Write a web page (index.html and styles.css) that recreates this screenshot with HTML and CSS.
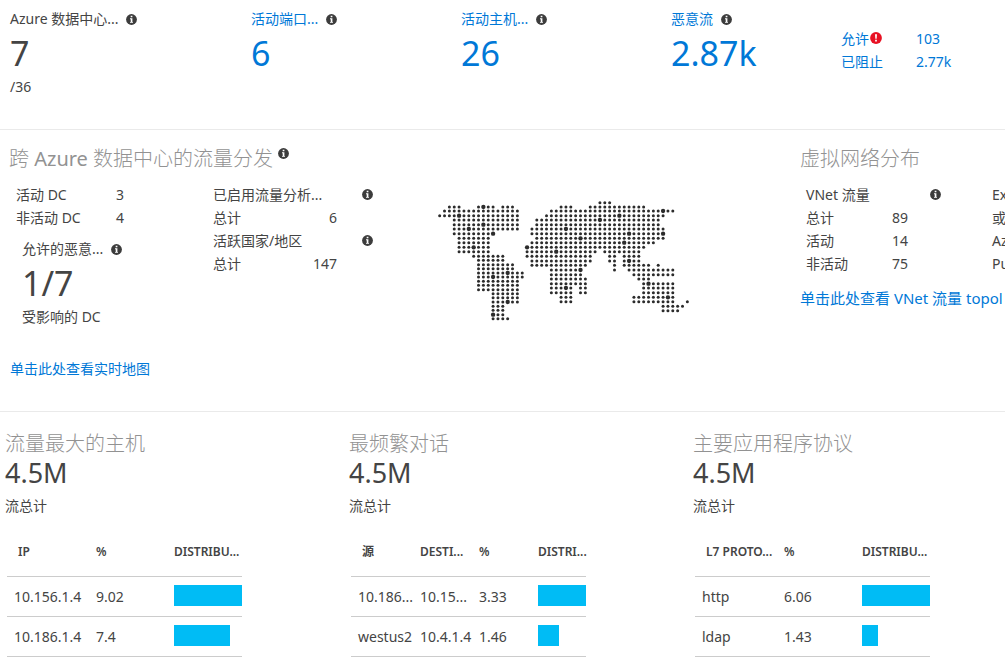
FILE: index.html
```html
<!DOCTYPE html>
<html lang="zh-CN">
<head>
<meta charset="utf-8">
<meta name="viewport" content="width=device-width, initial-scale=1">
<title>流量分析</title>
<link rel="stylesheet" href="styles.css">
</head>
<body>
<svg class="sprite" aria-hidden="true">
  <symbol id="info" viewBox="0 0 11 11">
    <circle cx="5.5" cy="5.5" r="5.4" fill="#3c3c3c"/>
    <path d="M4.7 1.8h1.7v1.5H4.7zM4 4.3h2.4v3.6H7v.9H4v-.9h.7V5.2H4z" fill="#fff"/>
  </symbol>
  <symbol id="alert" viewBox="0 0 11 11">
    <circle cx="5.5" cy="5.5" r="5.4" fill="#e81123"/>
    <path d="M4.6 2h1.8l-.3 4.3H4.9zM4.7 7.2h1.6v1.5H4.7z" fill="#fff"/>
  </symbol>
</svg>

<section class="summary">
  <div class="metric">
    <div class="metric-label">Azure 数据中心... <svg class="icon"><use href="#info"/></svg></div>
    <div class="metric-value">7</div>
    <div class="metric-sub">/36</div>
  </div>
  <div class="metric">
    <div class="metric-label"><a href="#endpoints">活动端口...</a> <svg class="icon"><use href="#info"/></svg></div>
    <a class="metric-value" href="#endpoints">6</a>
  </div>
  <div class="metric">
    <div class="metric-label"><a href="#hosts">活动主机...</a> <svg class="icon"><use href="#info"/></svg></div>
    <a class="metric-value" href="#hosts">26</a>
  </div>
  <div class="metric">
    <div class="metric-label"><a href="#malicious">恶意流</a> <svg class="icon"><use href="#info"/></svg></div>
    <a class="metric-value" href="#malicious">2.87k</a>
  </div>
  <dl class="flow-split">
    <dt><a href="#allowed">允许</a><svg class="icon icon-alert"><use href="#alert"/></svg></dt>
    <dd><a href="#allowed">103</a></dd>
    <dt><a href="#blocked">已阻止</a></dt>
    <dd><a href="#blocked">2.77k</a></dd>
  </dl>
</section>

<section class="distribution">
  <div class="datacenters">
    <h2 class="title"><span>跨 <span class="title-brand">Azure</span> 数据中心的流量分发</span><svg class="icon icon-raised"><use href="#info"/></svg></h2>
    <div class="datacenters-body">
      <div class="dc-status">
        <dl class="dc-counts">
          <dt>活动 DC</dt><dd>3</dd>
          <dt>非活动 DC</dt><dd>4</dd>
        </dl>
        <div class="metric affected">
          <div class="metric-label">允许的恶意... <svg class="icon"><use href="#info"/></svg></div>
          <div class="metric-value">1/7</div>
          <div class="metric-sub">受影响的 DC</div>
        </div>
      </div>
      <div class="totals">
        <div class="totals-head">已启用流量分析... <svg class="icon"><use href="#info"/></svg></div>
        <div class="totals-row"><span>总计</span><span>6</span></div>
        <div class="totals-head">活跃国家/地区 <svg class="icon"><use href="#info"/></svg></div>
        <div class="totals-row"><span>总计</span><span>147</span></div>
      </div>
      <svg class="map" id="map" viewBox="20 30 756 366" role="img" aria-label="世界地图"></svg>
    </div>
    <a class="map-link" href="#map">单击此处查看实时地图</a>
  </div>

  <div class="vnet">
    <h2 class="title">虚拟网络分布</h2>
    <div class="vnet-body">
      <dl class="vnet-counts">
        <dt class="vnet-head">VNet 流量 <svg class="icon"><use href="#info"/></svg></dt>
        <dt>总计</dt><dd>89</dd>
        <dt>活动</dt><dd>14</dd>
        <dt>非活动</dt><dd>75</dd>
      </dl>
      <div class="vnet-more">
        <div>Ex</div><div>或</div><div>Az</div><div>Pu</div>
      </div>
    </div>
    <a class="topology-link" href="#topology">单击此处查看 VNet 流量 topol</a>
  </div>
</section>

<section class="rankings">
  <div class="panel">
    <h2 class="title">流量最大的主机</h2>
    <div class="panel-value">4.5M</div>
    <div class="panel-sub">流总计</div>
    <table class="rank">
      <colgroup><col class="c-name"><col class="c-pct"><col></colgroup>
      <thead><tr><th>IP</th><th>%</th><th>DISTRIBU...</th></tr></thead>
      <tbody>
        <tr><td>10.156.1.4</td><td>9.02</td><td><div class="bar" style="width:100%"></div></td></tr>
        <tr><td>10.186.1.4</td><td>7.4</td><td><div class="bar" style="width:82%"></div></td></tr>
      </tbody>
    </table>
  </div>
  <div class="panel">
    <h2 class="title">最频繁对话</h2>
    <div class="panel-value">4.5M</div>
    <div class="panel-sub">流总计</div>
    <table class="rank">
      <colgroup><col class="c-source"><col class="c-part"><col class="c-part"><col></colgroup>
      <thead><tr><th>源</th><th>DESTI...</th><th>%</th><th>DISTRI...</th></tr></thead>
      <tbody>
        <tr><td>10.186...</td><td>10.15...</td><td>3.33</td><td><div class="bar" style="width:100%"></div></td></tr>
        <tr><td>westus2</td><td>10.4.1.4</td><td>1.46</td><td><div class="bar" style="width:44%"></div></td></tr>
      </tbody>
    </table>
  </div>
  <div class="panel">
    <h2 class="title">主要应用程序协议</h2>
    <div class="panel-value">4.5M</div>
    <div class="panel-sub">流总计</div>
    <table class="rank">
      <colgroup><col class="c-name"><col class="c-pct"><col></colgroup>
      <thead><tr><th>L7 PROTO...</th><th>%</th><th>DISTRIBU...</th></tr></thead>
      <tbody>
        <tr><td>http</td><td>6.06</td><td><div class="bar" style="width:100%"></div></td></tr>
        <tr><td>ldap</td><td>1.43</td><td><div class="bar" style="width:24%"></div></td></tr>
      </tbody>
    </table>
  </div>
</section>
<script src="map.js"></script>
</body>
</html>
```
FILE: styles.css
```css
* { box-sizing: border-box; }

body {
  margin: 0;
  background: #fff;
  color: #444;
  font-family: "Noto Sans", "Noto Sans CJK SC", sans-serif;
  font-size: 14px;
  line-height: 23px;
  overflow-x: hidden;
}

a { color: #0078d7; text-decoration: none; }
dl, dd, h2 { margin: 0; }

.sprite { position: absolute; width: 0; height: 0; }
.icon { display: block; flex: none; width: 11px; height: 11px; }

.title {
  display: flex;
  color: #929292;
  font-size: 20px;
  font-weight: 300;
  line-height: 28px;
  white-space: nowrap;
}
.title-brand { font-weight: 400; }
.icon-raised { margin: 3px 0 0 5px; }

/* Headline figures */
.summary {
  display: grid;
  grid-template-columns: 241fr 210fr 210fr 170fr 164fr;
  height: 130px;
  padding: 8px 0 0 10px;
  border-bottom: 1px solid #eaeaea;
}
.metric-label {
  display: flex;
  align-items: center;
  gap: 8px;
  line-height: 22px;
  white-space: nowrap;
}
.metric-value { display: block; font-size: 34px; line-height: 46px; }
.metric-sub { line-height: 22px; }

.flow-split {
  display: grid;
  grid-template-columns: 75px 1fr;
  align-content: start;
  padding-top: 19px;
}
.flow-split dt { display: flex; }
.icon-alert { width: 12px; height: 12px; margin: 5px 0 0 1px; }

/* Traffic distribution */
.distribution {
  display: grid;
  grid-template-columns: minmax(0, 1fr) 205px;
  padding: 15px 0 31px;
  border-bottom: 1px solid #eaeaea;
}
.datacenters .title { padding-left: 9px; }
.datacenters-body {
  display: grid;
  grid-template-columns: 213px 224px 252px;
  padding-top: 10px;
}
.dc-counts {
  display: grid;
  grid-template-columns: 100px 1fr;
  padding-left: 16px;
}
.affected { padding: 9px 0 0 22px; }
.totals { width: 160px; }
.totals-head {
  display: flex;
  align-items: center;
  justify-content: space-between;
  white-space: nowrap;
}
.totals-row {
  display: flex;
  justify-content: space-between;
  padding-right: 36px;
}
.map { display: block; width: 252px; height: 122px; margin-top: 17px; fill: #2b2b2b; }
.map-link { display: inline-block; margin: 30px 0 0 10px; line-height: 22px; }

.vnet { overflow: hidden; white-space: nowrap; }
.vnet-body { display: flex; padding: 10px 0 0 6px; }
.vnet-counts {
  display: grid;
  flex: none;
  grid-template-columns: 86px 1fr;
  width: 186px;
}
.vnet-head {
  display: flex;
  grid-column: 1 / -1;
  align-items: center;
  justify-content: space-between;
  padding-right: 51px;
}
.topology-link { display: inline-block; margin-top: 12px; font-size: 15px; line-height: 22px; }

/* Top-talker panels */
.rankings {
  display: grid;
  grid-template-columns: 344fr 344fr 312fr;
  padding: 18px 0 0 5px;
}
.panel-value { font-size: 27px; line-height: 30px; }
.panel-sub { margin-top: 7px; line-height: 22px; }

.rank {
  width: 235px;
  margin: 11px 0 0 2px;
  border-collapse: collapse;
  table-layout: fixed;
}
.c-name { width: 89px; }
.c-pct { width: 78px; }
.c-source { width: 69px; }
.c-part { width: 59px; }
.rank th,
.rank td {
  height: 40px;
  padding: 0;
  border-bottom: 1px solid #ccc;
  text-align: left;
  white-space: nowrap;
}
.rank th { height: 48px; font-size: 12px; font-weight: 600; }
.rank th:first-child { padding-left: 11px; }
.rank td:first-child { padding-left: 7px; }
.bar { height: 21px; margin-bottom: 2px; background: #00bcf5; }
```
FILE: map.js
```js
// Each row: y, runs of dot columns [first, last], columns with an enlarged dot.
const rows = [
  [38, [[33, 35]], []],
  [51, [[2, 4], [8, 11], [13, 15], [25, 27], [31, 42]], [9]],
  [63, [[1, 16], [23, 48]], [46]],
  [77, [[0, 16], [22, 46]], [4, 37]],
  [90, [[3, 16], [20, 45]], [33]],
  [104, [[3, 16], [20, 45]], [9]],
  [117, [[3, 16], [19, 46]], [6, 26]],
  [131, [[3, 11], [19, 46]], [11, 39, 46]],
  [145, [[4, 10], [20, 46]], [29]],
  [158, [[4, 10], [19, 44]], [38]],
  [172, [[4, 10], [18, 42]], [7, 18]],
  [185, [[4, 10], [18, 32], [34, 41]], [24]],
  [199, [[7, 13], [18, 31], [35, 36], [38, 41]], []],
  [213, [[19, 31], [35, 36], [38, 41]], [39]],
  [226, [[19, 30], [36, 36], [38, 43], [45, 45]], []],
  [240, [[23, 29], [36, 36], [39, 48]], [29]],
  [254, [[23, 29], [40, 48]], []],
  [267, [[23, 30], [41, 43]], []],
  [281, [[23, 30], [42, 48]], [43]],
  [294, [[23, 27], [29, 30], [42, 48]], [26]],
  [308, [[23, 27], [29, 30], [42, 48]], []],
  [322, [[25, 27], [40, 48]], [47]],
  [335, [[25, 27], [40, 48], [51, 51]], []],
  [349, [[46, 50]], []],
  [362, [[46, 49]], []],
  // South America
  [211, [[8, 13]], []],
  [224, [[8, 15]], []],
  [236, [[8, 15]], []],
  [249, [[8, 17]], [14]],
  [261, [[8, 17]], [11]],
  [274, [[8, 16]], []],
  [286, [[8, 16]], []],
  [299, [[8, 16]], []],
  [311, [[11, 16]], []],
  [323, [[11, 16]], []],
  [336, [[11, 16]], [14]],
  [349, [[11, 13]], []],
  [361, [[11, 13]], []],
  [374, [[11, 13]], [11]],
  [386, [[11, 14]], []],
];

const map = document.getElementById("map");
for (const [y, runs, large] of rows) {
  for (const [first, last] of runs) {
    for (let column = first; column <= last; column++) {
      const dot = document.createElementNS("http://www.w3.org/2000/svg", "circle");
      dot.setAttribute("cx", 28 + column * 14.57);
      dot.setAttribute("cy", y);
      dot.setAttribute("r", large.includes(column) ? 6.5 : 4.5);
      map.appendChild(dot);
    }
  }
}
```
